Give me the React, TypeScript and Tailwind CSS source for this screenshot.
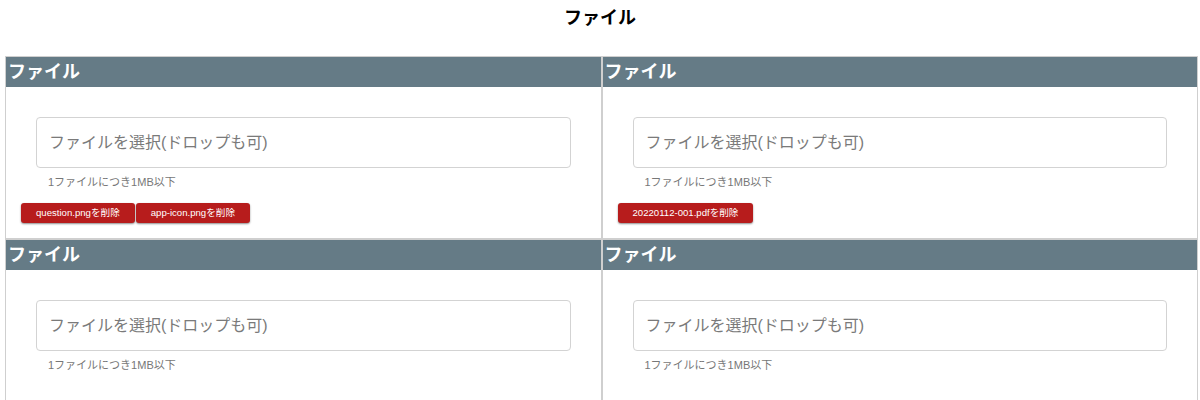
const font = { fontFamily: '"Liberation Sans", "Noto Sans CJK JP", sans-serif' };

type Cell = { files: string[] };

const cells: Cell[] = [
  { files: ['question.png', 'app-icon.png'] },
  { files: ['20220112-001.pdf'] },
  { files: [] },
  { files: [] },
];

const FileCell = ({ files }: Cell) => (
  <div className="border border-[#cfcfcf] bg-white">
    <div className="h-[30px] bg-[#657b86] pl-[2px] text-[18px] leading-[30px] font-bold text-white">
      ファイル
    </div>
    <div className="min-h-[151px] pt-[30px] pb-[15px]">
      <div className="mx-[30px] flex h-[51px] items-center rounded-[4px] border border-[#d3d3d3] pl-[12px] text-[16px] text-[#7a7a7a]">
        ファイルを選択(ドロップも可)
      </div>
      <div className="mt-[6px] ml-[42px] text-[11px] leading-[16px] text-[#777]">1ファイルにつき1MB以下</div>
      {files.length > 0 && (
        <div className="mt-[13px] flex gap-[1px] px-[15px]">
          {files.map((f) => (
            <button
              key={f}
              className="h-[20px] rounded-[3px] bg-[#b71c1c] px-[15px] text-[9.6px] leading-[20px] text-white shadow-[0_1px_2px_rgba(0,0,0,0.45)]"
            >
              {f}を削除
            </button>
          ))}
        </div>
      )}
    </div>
  </div>
);

export default function App() {
  return (
    <div className="h-[400px] overflow-hidden bg-white" style={font}>
      <h1 className="pt-[4px] pb-[24px] text-center text-[18px] leading-[28px] font-bold text-black">ファイル</h1>
      <div className="ml-[5px] mr-[2px] grid grid-cols-2">
        {cells.map((c, i) => (
          <FileCell key={i} files={c.files} />
        ))}
      </div>
    </div>
  );
}
